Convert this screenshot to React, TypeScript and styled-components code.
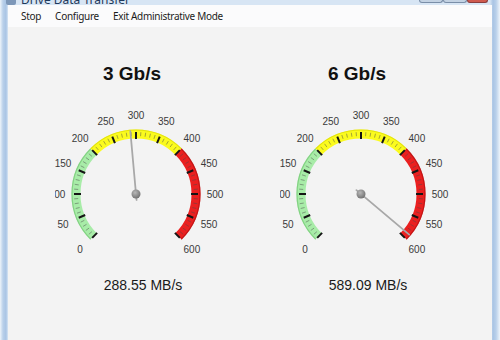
import React from "react";
import styled, { createGlobalStyle } from "styled-components";

const GlobalStyle = createGlobalStyle`
  html, body {
    margin: 0;
    padding: 0;
    background: #ffffff;
  }
`;

const gauges = [
  { title: "3 Gb/s", value: 288.55 },
  { title: "6 Gb/s", value: 589.09 },
];

const menuItems = ["Stop", "Configure", "Exit Administrative Mode"];

const Window = styled.div`
  width: 500px;
  height: 340px;
  display: flex;
  flex-direction: column;
  background: linear-gradient(90deg, #eef4fa 0px, #b9d0ea 3px, #a9c4e4 6px, #d7e5f4 8px, #d7e5f4 490px, #a9c4e4 493px, #b9d0ea 496px, #eef4fa 500px);
  overflow: hidden;
  font-family: "Liberation Sans", Arial, sans-serif;
`;

const TitleBar = styled.div`
  height: 5px;
  display: flex;
  justify-content: space-between;
  align-items: flex-end;
  padding: 0 10px 0 6px;
  overflow: hidden;
`;

const TitleText = styled.div`
  font-family: "Noto Sans", sans-serif;
  font-size: 12px;
  line-height: 12px;
  color: #1e395b;
  margin-bottom: -1px;
  display: flex;
  align-items: center;
  gap: 5px;
  white-space: nowrap;
`;

const TitleIcon = styled.span`
  width: 10px;
  height: 10px;
  background: #7d97b8;
  border-radius: 2px;
`;

const WindowButtons = styled.div`
  display: flex;
  align-self: stretch;
  margin-right: 2px;
`;

const WinButton = styled.div<{ $close?: boolean; $w: number }>`
  width: ${(p) => p.$w}px;
  height: 4px;
  margin-top: -1px;
  border: 1px solid ${(p) => (p.$close ? "#8a3d3d" : "#7a8ea8")};
  border-top: none;
  border-radius: 0 0 3px 3px;
  box-sizing: border-box;
  background: ${(p) => (p.$close ? "#cf5a4f" : "#c3d2e3")};
`;

const Client = styled.div`
  flex: 1;
  margin: 0 8px;
  display: flex;
  flex-direction: column;
  min-height: 0;
`;

const MenuBar = styled.div`
  height: 22px;
  display: flex;
  align-items: center;
  gap: 14px;
  padding-left: 13px;
  background: #fbfbfc;
  font-family: "Noto Sans", sans-serif;
  font-size: 10px;
  color: #1b1b1b;
`;

const MenuItem = styled.span`
  letter-spacing: -0.3px;
`;

const Content = styled.div`
  flex: 1;
  display: flex;
  gap: 54px;
  padding: 35px 0 0 47px;
  background: #f3f3f3;
`;

const Panel = styled.div`
  width: 171px;
  display: flex;
  flex-direction: column;
`;

const GaugeTitle = styled.div`
  font-size: 19px;
  font-weight: bold;
  line-height: 22px;
  color: #111111;
  text-align: center;
  padding-right: 17px;
  margin-top: 1px;
  margin-bottom: 21px;
`;

const GaugeSvg = styled.svg`
  display: block;
  overflow: hidden;
`;

const GaugeValue = styled.div`
  font-size: 14px;
  line-height: 18px;
  color: #1a1a1a;
  text-align: center;
  padding-left: 5px;
  margin-top: 16px;
`;

const CX = 81;
const CY = 88;
const W = 171;
const H = 154;

const angleOf = (v: number) => ((v - 300) / 600) * 270;

const polar = (r: number, deg: number) => {
  const a = (deg * Math.PI) / 180;
  return { x: CX + r * Math.sin(a), y: CY - r * Math.cos(a) };
};

const arc = (r: number, from: number, to: number) => {
  const p1 = polar(r, angleOf(from));
  const p2 = polar(r, angleOf(to));
  const large = angleOf(to) - angleOf(from) > 180 ? 1 : 0;
  return `M ${p1.x} ${p1.y} A ${r} ${r} 0 ${large} 1 ${p2.x} ${p2.y}`;
};

const bands = [
  { from: 0, to: 200, fill: "#a8eca8", edge: "#72c872" },
  { from: 200, to: 400, fill: "#fbfb1e", edge: "#d8d800" },
  { from: 400, to: 600, fill: "#ea2020", edge: "#b21010" },
];

function Gauge({ value, id }: { value: number; id: string }) {
  const ticks: React.ReactNode[] = [];
  for (let v = 0; v <= 600; v += 10) {
    const major = v % 50 === 0;
    const a = angleOf(v);
    const p1 = polar(major ? 55 : 58, a);
    const p2 = polar(62, a);
    ticks.push(
      <line
        key={v}
        x1={p1.x}
        y1={p1.y}
        x2={p2.x}
        y2={p2.y}
        stroke={major ? "#151515" : "#4a4a4a"}
        strokeWidth={major ? 2 : 0.8}
        opacity={major ? 1 : 0.6}
      />
    );
  }
  const labels: React.ReactNode[] = [];
  for (let v = 0; v <= 600; v += 50) {
    const p = polar(79, angleOf(v));
    labels.push(
      <text
        key={v}
        x={p.x}
        y={p.y}
        textAnchor="middle"
        dominantBaseline="central"
        fontFamily="'Liberation Sans', Arial, sans-serif"
        fontSize="10"
        fill="#3a3a3a"
      >
        {v}
      </text>
    );
  }
  const tip = polar(63, angleOf(value));
  const tail = polar(-6, angleOf(value));
  return (
    <GaugeSvg width={W} height={H} viewBox={`0 0 ${W} ${H}`}>
      <defs>
        <radialGradient id={`${id}-hub`} cx="40%" cy="35%" r="70%">
          <stop offset="0%" stopColor="#b8b8b8" />
          <stop offset="100%" stopColor="#6e6e6e" />
        </radialGradient>
      </defs>
      {bands.map((b) => (
        <g key={b.from}>
          <path d={arc(60, b.from, b.to)} fill="none" stroke={b.fill} strokeWidth={9} />
          <path d={arc(64, b.from, b.to)} fill="none" stroke={b.edge} strokeWidth={1.2} opacity={0.7} />
        </g>
      ))}
      {ticks}
      {labels}
      <line x1={tail.x} y1={tail.y} x2={tip.x} y2={tip.y} stroke="#a8a8a8" strokeWidth={1.8} strokeLinecap="round" />
      <circle cx={CX} cy={CY} r={4.5} fill={`url(#${id}-hub)`} />
    </GaugeSvg>
  );
}

export default function App() {
  return (
    <>
      <GlobalStyle />
      <Window>
        <TitleBar>
          <TitleText>
            <TitleIcon />
            Drive Data Transfer
          </TitleText>
          <WindowButtons>
            <WinButton $w={24} />
            <WinButton $w={24} />
            <WinButton $w={21} $close />
          </WindowButtons>
        </TitleBar>
        <Client>
          <MenuBar>
            {menuItems.map((m) => (
              <MenuItem key={m}>{m}</MenuItem>
            ))}
          </MenuBar>
          <Content>
            {gauges.map((g, i) => (
              <Panel key={g.title}>
                <GaugeTitle>{g.title}</GaugeTitle>
                <Gauge value={g.value} id={`g${i}`} />
                <GaugeValue>{g.value.toFixed(2)} MB/s</GaugeValue>
              </Panel>
            ))}
          </Content>
        </Client>
      </Window>
    </>
  );
}
